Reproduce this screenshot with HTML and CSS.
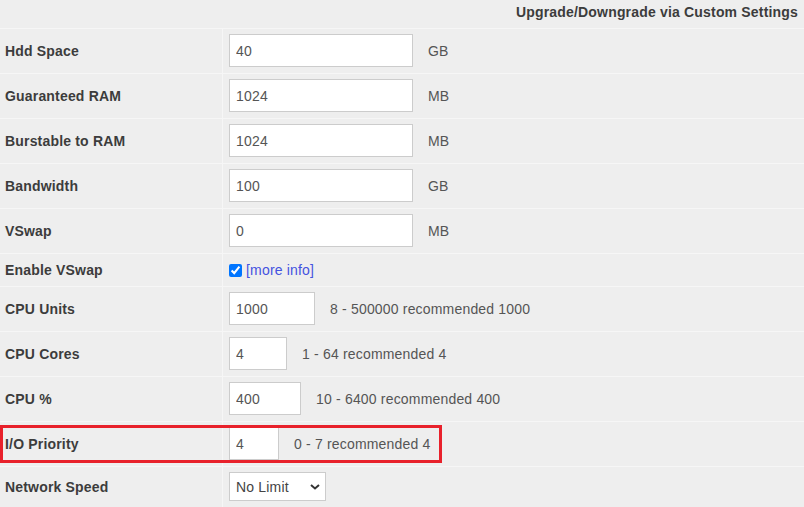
FILE: index.html
```html
<!DOCTYPE html>
<html lang="en">
<head>
    <meta charset="UTF-8">
    <meta name="viewport" content="width=device-width, initial-scale=1.0">
    <title>Custom Settings</title>
    <link rel="stylesheet" href="styles.css">
</head>
<body>
    <div class="settings">
        <div class="settings-head">Upgrade/Downgrade via Custom Settings</div>

        <div class="row">
            <div class="label">Hdd Space</div>
            <div class="field"><input class="num w-lg" type="text" value="40"><span class="hint">GB</span></div>
        </div>
        <div class="row">
            <div class="label">Guaranteed RAM</div>
            <div class="field"><input class="num w-lg" type="text" value="1024"><span class="hint">MB</span></div>
        </div>
        <div class="row">
            <div class="label">Burstable to RAM</div>
            <div class="field"><input class="num w-lg" type="text" value="1024"><span class="hint">MB</span></div>
        </div>
        <div class="row">
            <div class="label">Bandwidth</div>
            <div class="field"><input class="num w-lg" type="text" value="100"><span class="hint">GB</span></div>
        </div>
        <div class="row">
            <div class="label">VSwap</div>
            <div class="field"><input class="num w-lg" type="text" value="0"><span class="hint">MB</span></div>
        </div>
        <div class="row row-check">
            <div class="label">Enable VSwap</div>
            <div class="field">
                <input class="check" type="checkbox" checked>
                <a class="more" href="#">[more info]</a>
            </div>
        </div>
        <div class="row">
            <div class="label">CPU Units</div>
            <div class="field"><input class="num w-units" type="text" value="1000"><span class="hint">8 - 500000 recommended 1000</span></div>
        </div>
        <div class="row">
            <div class="label">CPU Cores</div>
            <div class="field"><input class="num w-cores" type="text" value="4"><span class="hint">1 - 64 recommended 4</span></div>
        </div>
        <div class="row">
            <div class="label">CPU %</div>
            <div class="field"><input class="num w-pct" type="text" value="400"><span class="hint">10 - 6400 recommended 400</span></div>
        </div>
        <div class="row row-marked">
            <div class="label">I/O Priority</div>
            <div class="field"><input class="num w-io" type="text" value="4"><span class="hint">0 - 7 recommended 4</span></div>
            <div class="mark"></div>
        </div>
        <div class="row row-select">
            <div class="label">Network Speed</div>
            <div class="field">
                <span class="select-wrap">
                    <select class="speed">
                        <option>No Limit</option>
                        <option>100 Mbps</option>
                        <option>10 Mbps</option>
                    </select>
                    <svg class="chevron" width="10" height="6" viewBox="0 0 10 6"><path d="M1 1l4 3.5L9 1" fill="none" stroke="#333" stroke-width="2"/></svg>
                </span>
            </div>
        </div>
    </div>
</body>
</html>
```

FILE: styles.css
```css
body {
    margin: 0;
    background: #eeeeee;
    font-family: "Liberation Sans", Arial, sans-serif;
    font-size: 14px;
    letter-spacing: 0.18px;
    color: #555;
    overflow: hidden;
}
.settings {
    width: 804px;
}
.settings-head {
    height: 29px;
    box-sizing: border-box;
    padding: 2px 6px 6px;
    line-height: 20px;
    text-align: right;
    font-weight: bold;
    color: #3c3c3c;
    border-bottom: 1px solid #f6f6f6;
}
.row {
    display: flex;
    border-bottom: 1px solid #f6f6f6;
    position: relative;
}
.label {
    width: 223px;
    flex-shrink: 0;
    box-sizing: border-box;
    padding-left: 5px;
    display: flex;
    align-items: center;
    border-right: 1px solid #f6f6f6;
    font-weight: bold;
    color: #3c3c3c;
}
.field {
    display: flex;
    align-items: center;
    padding: 5px 6px 6px;
}
.num {
    height: 33px;
    box-sizing: border-box;
    border: 1px solid #cccccc;
    background: #fff;
    padding: 0 6px;
    font-family: inherit;
    font-size: 14px;
    letter-spacing: inherit;
    color: #555;
    outline: none;
    margin: 0;
}
.w-lg { width: 184px; }
.w-units { width: 86px; }
.w-cores { width: 58px; }
.w-pct { width: 72px; }
.w-io { width: 50px; }
.hint {
    margin-left: 15px;
}
.row-check .field {
    height: 32px;
    padding: 0 6px;
}
.check {
    width: 13px;
    height: 13px;
    margin: 0;
    accent-color: #0075ff;
}
.more {
    margin-left: 4px;
    color: #4453e0;
    text-decoration: none;
}
.mark {
    position: absolute;
    left: 0;
    top: 3px;
    width: 442px;
    height: 38px;
    box-sizing: border-box;
    border: 3px solid #e8212b;
}
.row-select .field {
    padding: 5px 6px 6px;
}
.select-wrap {
    position: relative;
    display: inline-block;
}
.speed {
    appearance: none;
    -webkit-appearance: none;
    width: 97px;
    height: 29px;
    box-sizing: border-box;
    border: 1px solid #cccccc;
    border-radius: 0;
    background: #fff;
    padding: 0 6px;
    font-family: inherit;
    font-size: 14px;
    letter-spacing: inherit;
    color: #444;
    margin: 0;
    outline: none;
}
.chevron {
    position: absolute;
    right: 6px;
    top: 12px;
    pointer-events: none;
}
```
